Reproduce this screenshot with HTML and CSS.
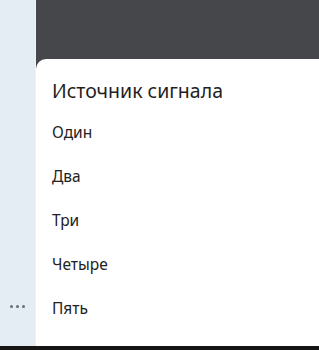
FILE: index.html
```html
<!DOCTYPE html>
<html lang="ru">
<head>
  <meta charset="UTF-8">
  <meta name="viewport" content="width=device-width, initial-scale=1.0">
  <title>Источник сигнала</title>
  <link rel="stylesheet" href="styles.css">
</head>
<body>
  <div class="layout">
    <aside class="sidebar">
      <div class="more-btn">
        <span class="dot"></span>
        <span class="dot"></span>
        <span class="dot"></span>
      </div>
    </aside>

    <main class="main">
      <div class="header"></div>
      <div class="sheet">
        <h2 class="sheet-title">Источник сигнала</h2>
        <ul class="source-list">
          <li class="source-item">Один</li>
          <li class="source-item">Два</li>
          <li class="source-item">Три</li>
          <li class="source-item">Четыре</li>
          <li class="source-item">Пять</li>
        </ul>
      </div>
    </main>
  </div>
  <div class="bottom-bar"></div>
</body>
</html>
```

FILE: styles.css
```css
body {
  margin: 0;
  font-family: 'Noto Sans', 'Open Sans', sans-serif;
  color: #222;
  background-color: #151515;
  overflow: hidden;
}

.layout {
  display: flex;
  height: 346px;
}

.sidebar {
  width: 36px;
  border-right: 1px solid #edf2f8;
  background-color: #e4ecf4;
  display: flex;
  flex-direction: column;
  justify-content: flex-end;
  align-items: center;
  padding-bottom: 38px;
  box-sizing: border-box;
}

.more-btn {
  display: flex;
  gap: 3px;
}

.dot {
  width: 3px;
  height: 3px;
  border-radius: 50%;
  background-color: #6b6e73;
}

.main {
  flex: 1;
  display: flex;
  flex-direction: column;
  background-color: #46474b;
}

.header {
  height: 59px;
}

.sheet {
  flex: 1;
  background: #fff;
  border-top-left-radius: 10px;
  padding-left: 16px;
}

.sheet-title {
  margin: 18px 0 5px;
  font-size: 19.5px;
  font-weight: 400;
  line-height: 28px;
  color: #1f1f1f;
}

.source-list {
  list-style: none;
  margin: 0;
  padding: 0;
}

.source-item {
  height: 44px;
  line-height: 44px;
  font-size: 15.5px;
}

.bottom-bar {
  height: 4px;
  background-color: #151515;
}
```
